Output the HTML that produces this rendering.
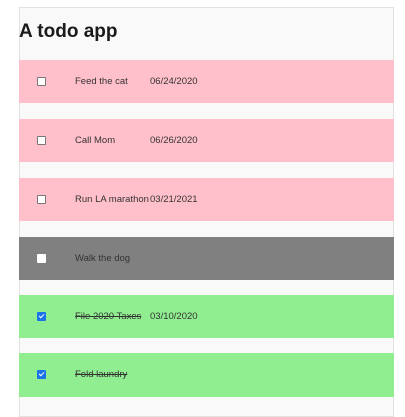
<!DOCTYPE html>
<html><head><style>
html,body{margin:0;background:#fff;font-family:"Liberation Sans",Arial,sans-serif;width:405px;height:407px;overflow:hidden}
.card{position:absolute;left:19px;top:7px;width:375px;height:410px;background:#f9f9f9;border:1px solid #e2e2e2;box-sizing:border-box}
h1{position:absolute;left:19px;top:21px;margin:0;font-size:19px;font-weight:bold;color:#1a1a1a}
.row{position:absolute;left:19px;width:375px;height:43px;font-size:9.5px;color:#333}
.row span{position:absolute;top:16px}
.cb{position:absolute;left:18px;top:17px;width:7px;height:7px;border:1px solid #777;border-radius:1px;background:#fff}
.ck{background:#1a73e8;border-color:#1a73e8}
.ck:after{content:"";position:absolute;left:2px;top:0px;width:2px;height:4px;border:solid #fff;border-width:0 1.3px 1.3px 0;transform:rotate(45deg)}
.pink{background:#ffc0cb}.gray{background:#808080}.green{background:#90ee90}
.t{left:56px}.d{left:131px}
s{color:#333}
</style></head><body>
<div class="card"></div>
<h1>A todo app</h1>
<div class="row pink" style="top:60px"><div class="cb"></div><span class="t">Feed the cat</span><span class="d">06/24/2020</span></div>
<div class="row pink" style="top:119px"><div class="cb"></div><span class="t">Call Mom</span><span class="d">06/26/2020</span></div>
<div class="row pink" style="top:178px"><div class="cb"></div><span class="t">Run LA marathon</span><span class="d">03/21/2021</span></div>
<div class="row gray" style="top:237px"><div class="cb" style="border-color:#fff"></div><span class="t">Walk the dog</span></div>
<div class="row green" style="top:295px"><div class="cb ck"></div><span class="t"><s>File 2020 Taxes</s></span><span class="d">03/10/2020</span></div>
<div class="row green" style="top:353px;height:44px"><div class="cb ck"></div><span class="t"><s>Fold laundry</s></span></div>
</body></html>
